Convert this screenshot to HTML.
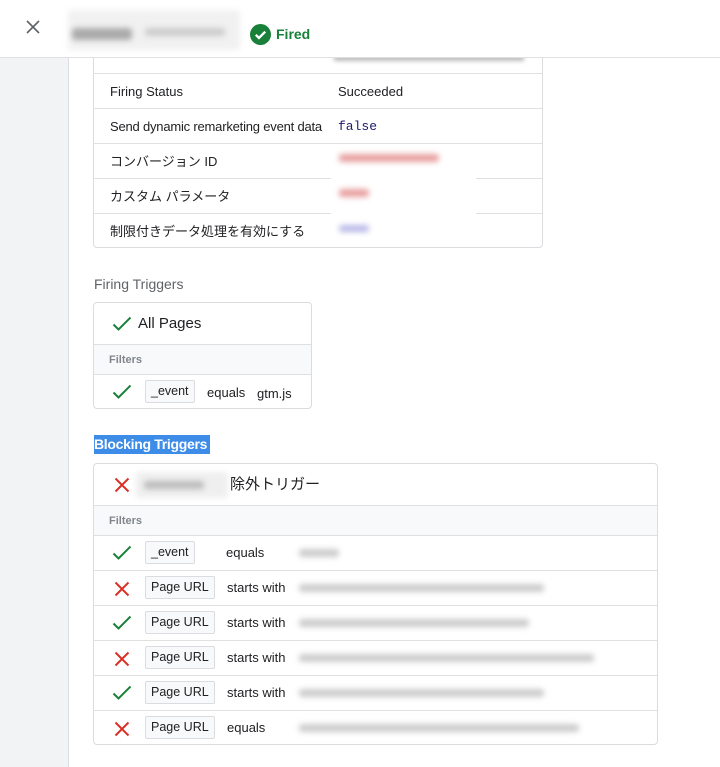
<!DOCTYPE html>
<html><head><meta charset="utf-8"><style>
*{box-sizing:border-box;margin:0;padding:0}
body{width:720px;height:767px;overflow:hidden;background:#fff;font-family:"Liberation Sans","Noto Sans CJK JP",sans-serif;color:#202124;position:relative}
.side{position:absolute;left:0;top:0;width:69px;height:767px;background:#f1f3f4;border-right:1px solid #dadce0}
.hdr{position:absolute;left:0;top:0;width:720px;height:58px;background:#fff;border-bottom:1px solid #e0e0e0;z-index:5}
.abs{position:absolute;white-space:nowrap;line-height:17px}
.card{position:absolute;border:1px solid #dadce0;border-radius:4px;background:#fff;overflow:hidden}
.row{position:absolute;left:0;right:0;border-top:1px solid #e0e0e0;font-size:13px}
.blur{position:absolute;filter:blur(3px);border-radius:3px}
.chip{position:absolute;border:1px solid #dadce0;background:#f8f9fa;border-radius:2px;font-size:12.5px;height:23px;line-height:21px;padding:0 5px;white-space:nowrap}
.filt{background:#f8f9fa;font-size:11px;font-weight:bold;color:#80868b}
</style></head><body>
<div class="side"></div>
<div class="hdr">
 <svg class="abs" style="left:25px;top:19px" width="16" height="16" viewBox="0 0 16 16"><path d="M2 2L14 14M14 2L2 14" stroke="#5f6368" stroke-width="1.6"/></svg>
 <div class="blur" style="left:68px;top:10px;width:172px;height:40px;background:#f1f1f1"></div>
 <div class="blur" style="left:72px;top:28px;width:60px;height:12px;background:#aaa"></div>
 <div class="blur" style="left:145px;top:28px;width:80px;height:8px;background:#ccc"></div>
 <svg class="abs" style="left:250px;top:24px" width="21" height="21" viewBox="0 0 20 20"><circle cx="10" cy="10" r="10" fill="#188038"/><path d="M5.5 10.3l3 3 6-6" stroke="#fff" stroke-width="2.2" fill="none"/></svg>
 <div class="abs" style="left:276px;top:26px;font-size:14px;color:#188038;font-weight:bold">Fired</div>
</div>

<div class="card" style="left:93px;top:40px;width:450px;height:208px">
 <div class="abs" style="left:240px;top:14px;width:190px;height:6px;background:#bbb;filter:blur(2px)"></div>
 <div class="row" style="top:32px;height:35px"><span class="abs" style="left:16px;top:9px">Firing Status</span><span class="abs" style="left:244px;top:9px">Succeeded</span></div>
 <div class="row" style="top:67px;height:35px"><span class="abs" style="left:16px;top:9px;letter-spacing:-0.2px">Send dynamic remarketing event data</span><span class="abs" style="left:244px;top:9px;font-family:'Liberation Mono',monospace;color:#1a1a6e">false</span></div>
 <div class="row" style="top:102px;height:35px"><span class="abs" style="left:16px;top:9px">コンバージョン ID</span></div>
 <div class="row" style="top:137px;height:35px"><span class="abs" style="left:16px;top:9px">カスタム パラメータ</span></div>
 <div class="row" style="top:172px;height:36px"><span class="abs" style="left:16px;top:9px">制限付きデータ処理を有効にする</span></div>
 <div class="abs" style="left:237px;top:103px;width:145px;height:100px;background:#fff"></div>
 <div class="blur" style="left:245px;top:113px;width:100px;height:8px;background:#e8a0a0"></div>
 <div class="blur" style="left:245px;top:148px;width:30px;height:8px;background:#e8a0a0"></div>
 <div class="blur" style="left:245px;top:184px;width:30px;height:7px;background:#b8b8e8"></div>
</div>

<div class="abs" style="left:94px;top:276px;font-size:14px;color:#5f6368">Firing Triggers</div>
<div class="card" style="left:93px;top:302px;width:219px;height:107px">
 <svg class="abs" style="left:18px;top:13px" width="20" height="16" viewBox="0 0 20 16"><path d="M1.5 8.5l5 5L18.5 1.5" stroke="#188038" stroke-width="2" fill="none"/></svg>
 <div class="abs" style="left:44px;top:12px;font-size:15px">All Pages</div>
 <div class="row filt" style="top:41px;height:31px"><span class="abs" style="left:15px;top:7px">Filters</span></div>
 <div class="row" style="top:71px;height:36px">
  <svg class="abs" style="left:18px;top:9px" width="20" height="16" viewBox="0 0 20 16"><path d="M1.5 8.5l5 5L18.5 1.5" stroke="#188038" stroke-width="2" fill="none"/></svg>
  <div class="chip" style="left:51px;top:5px">_event</div>
  <span class="abs" style="left:113px;top:9px">equals</span><span class="abs" style="left:163px;top:10px">gtm.js</span>
 </div>
</div>

<div class="abs" style="left:94px;top:435px;height:19px;width:116px;background:#3d8ce8;color:#fff;font-size:14px;font-weight:bold;line-height:19px;letter-spacing:-0.3px">Blocking Triggers</div>

<div class="card" style="left:93px;top:463px;width:565px;height:282px">
 <svg class="abs" style="left:20px;top:13px" width="16" height="16" viewBox="0 0 16 16"><path d="M1.5 1.5L14.5 14.5M14.5 1.5L1.5 14.5" stroke="#d93025" stroke-width="2"/></svg>
 <div class="blur" style="left:42px;top:8px;width:92px;height:26px;background:#efefef"></div>
 <div class="blur" style="left:50px;top:17px;width:60px;height:8px;background:#bbb"></div>
 <div class="abs" style="left:136px;top:11px;font-size:15px;line-height:19px">除外トリガー</div>
 <div class="row filt" style="top:41px;height:31px"><span class="abs" style="left:15px;top:7px">Filters</span></div>
 <div class="row" style="top:71px;height:35px">
  <svg class="abs" style="left:18px;top:9px" width="20" height="16" viewBox="0 0 20 16"><path d="M1.5 8.5l5 5L18.5 1.5" stroke="#188038" stroke-width="2" fill="none"/></svg>
  <div class="chip" style="left:51px;top:5px">_event</div><span class="abs" style="left:132px;top:8px">equals</span>
  <div class="blur" style="left:205px;top:13px;width:40px;height:8px;background:#ccc"></div></div>
 <div class="row" style="top:106px;height:35px">
  <svg class="abs" style="left:20px;top:10px" width="16" height="16" viewBox="0 0 16 16"><path d="M1.5 1.5L14.5 14.5M14.5 1.5L1.5 14.5" stroke="#d93025" stroke-width="2"/></svg>
  <div class="chip" style="left:51px;top:5px">Page URL</div><span class="abs" style="left:133px;top:8px">starts with</span>
  <div class="blur" style="left:205px;top:13px;width:245px;height:8px;background:#ccc"></div></div>
 <div class="row" style="top:141px;height:35px">
  <svg class="abs" style="left:18px;top:9px" width="20" height="16" viewBox="0 0 20 16"><path d="M1.5 8.5l5 5L18.5 1.5" stroke="#188038" stroke-width="2" fill="none"/></svg>
  <div class="chip" style="left:51px;top:5px">Page URL</div><span class="abs" style="left:133px;top:8px">starts with</span>
  <div class="blur" style="left:205px;top:13px;width:230px;height:8px;background:#ccc"></div></div>
 <div class="row" style="top:176px;height:35px">
  <svg class="abs" style="left:20px;top:10px" width="16" height="16" viewBox="0 0 16 16"><path d="M1.5 1.5L14.5 14.5M14.5 1.5L1.5 14.5" stroke="#d93025" stroke-width="2"/></svg>
  <div class="chip" style="left:51px;top:5px">Page URL</div><span class="abs" style="left:133px;top:8px">starts with</span>
  <div class="blur" style="left:205px;top:13px;width:295px;height:8px;background:#ccc"></div></div>
 <div class="row" style="top:211px;height:35px">
  <svg class="abs" style="left:18px;top:9px" width="20" height="16" viewBox="0 0 20 16"><path d="M1.5 8.5l5 5L18.5 1.5" stroke="#188038" stroke-width="2" fill="none"/></svg>
  <div class="chip" style="left:51px;top:5px">Page URL</div><span class="abs" style="left:133px;top:8px">starts with</span>
  <div class="blur" style="left:205px;top:13px;width:245px;height:8px;background:#ccc"></div></div>
 <div class="row" style="top:246px;height:36px">
  <svg class="abs" style="left:20px;top:10px" width="16" height="16" viewBox="0 0 16 16"><path d="M1.5 1.5L14.5 14.5M14.5 1.5L1.5 14.5" stroke="#d93025" stroke-width="2"/></svg>
  <div class="chip" style="left:51px;top:5px">Page URL</div><span class="abs" style="left:133px;top:8px">equals</span>
  <div class="blur" style="left:205px;top:13px;width:280px;height:8px;background:#ccc"></div></div>
</div>
</body></html>
